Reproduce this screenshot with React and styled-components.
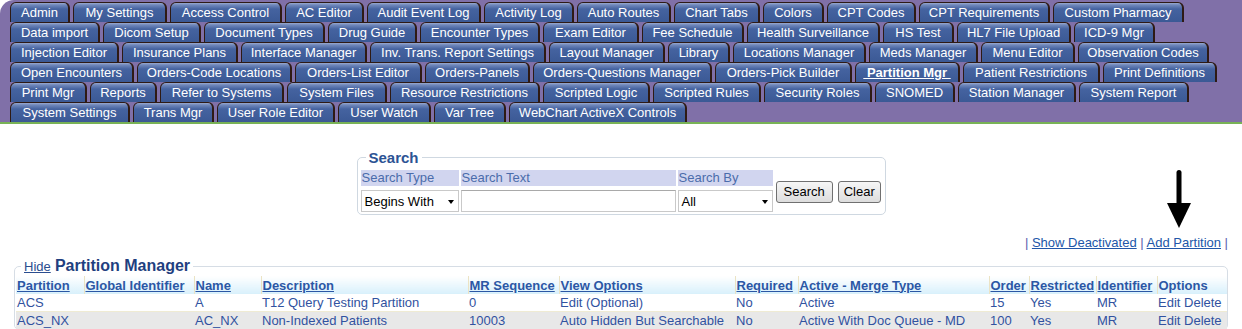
import React from 'react';
import styled, { createGlobalStyle } from 'styled-components';

const GlobalStyle = createGlobalStyle`
  body {
    margin: 0;
    background: #fff;
    font-family: "Liberation Sans", Arial, sans-serif;
    font-size: 13px;
  }
`;

// [label, tab width in px]
const TAB_ROWS = [
  [['Admin', 60], ['My Settings', 94], ['Access Control', 112], ['AC Editor', 79], ['Audit Event Log', 114], ['Activity Log', 90], ['Auto Routes', 94], ['Chart Tabs', 86], ['Colors', 61], ['CPT Codes', 89], ['CPT Requirements', 131], ['Custom Pharmacy', 131]],
  [['Data import', 90], ['Dicom Setup', 98], ['Document Types', 121], ['Drug Guide', 89], ['Encounter Types', 120], ['Exam Editor', 96], ['Fee Schedule', 102], ['Health Surveillance', 133], ['HS Test', 71], ['HL7 File Upload', 114], ['ICD-9 Mgr', 81]],
  [['Injection Editor', 109], ['Insurance Plans', 116], ['Interface Manager', 126], ['Inv. Trans. Report Settings', 176], ['Layout Manager', 116], ['Library', 62], ['Locations Manager', 133], ['Meds Manager', 109], ['Menu Editor', 94], ['Observation Codes', 131]],
  [['Open Encounters', 124], ['Orders-Code Locations', 155], ['Orders-List Editor', 127], ['Orders-Panels', 105], ['Orders-Questions Manager', 179], ['Orders-Pick Builder', 137], ['Partition Mgr', 105], ['Patient Restrictions', 137], ['Print Definitions', 114]],
  [['Print Mgr', 77], ['Reports', 67], ['Refer to Systems', 124], ['System Files', 100], ['Resource Restrictions', 150], ['Scripted Logic', 107], ['Scripted Rules', 108], ['Security Roles', 108], ['SNOMED', 80], ['Station Manager', 118], ['System Report', 110]],
  [['System Settings', 120], ['Trans Mgr', 81], ['User Role Editor', 118], ['User Watch', 93], ['Var Tree', 72], ['WebChart ActiveX Controls', 178]],
];

const ACTIVE_TAB = 'Partition Mgr';

const COLUMNS = [
  { label: 'Partition', width: 68 },
  { label: 'Global Identifier', width: 110 },
  { label: 'Name', width: 67 },
  { label: 'Description', width: 207 },
  { label: 'MR Sequence', width: 91 },
  { label: 'View Options', width: 176 },
  { label: 'Required', width: 63 },
  { label: 'Active - Merge Type', width: 191 },
  { label: 'Order', width: 40 },
  { label: 'Restricted', width: 67 },
  { label: 'Identifier', width: 61 },
  { label: 'Options', width: 70, plain: true },
];

const PARTITIONS = [
  ['ACS', '', 'A', 'T12 Query Testing Partition', '0', 'Edit (Optional)', 'No', 'Active', '15', 'Yes', 'MR', 'Edit Delete'],
  ['ACS_NX', '', 'AC_NX', 'Non-Indexed Patients', '10003', 'Auto Hidden But Searchable', 'No', 'Active With Doc Queue - MD', '100', 'Yes', 'MR', 'Edit Delete'],
];

const TabBar = styled.div`
  background: #8070a8;
  border-top-left-radius: 14px;
  padding: 2px 0 0 10px;
  border-bottom: 2px solid #78b256;
`;

const TabRow = styled.div`
  display: flex;
  gap: 3px;
  height: 20px;
`;

const Tab = styled.a`
  box-sizing: border-box;
  display: block;
  flex: none;
  height: 20px;
  border: 1px solid #2e1a14;
  border-right-width: 2px;
  border-bottom: 0;
  border-radius: 6px 6px 0 0;
  background: linear-gradient(#9aaad0 0, #6f87ba 2px, #4563a0 6px, #3b5995 100%);
  color: #fff;
  font-size: 13px;
  line-height: 19px;
  text-align: center;
  font-weight: ${p => (p.$active ? 'bold' : 'normal')};
  text-decoration: ${p => (p.$active ? 'underline' : 'none')};
  white-space: nowrap;
  cursor: pointer;
`;

const Main = styled.div`
  position: relative;
  padding: 25px 14px 0;
`;

const SearchBox = styled.fieldset`
  box-sizing: border-box;
  width: 529px;
  margin: 0 auto;
  padding: 4px 3px 2px;
  border: 1px solid #cfd8e1;
  border-radius: 5px;
`;

const Legend = styled.legend`
  margin-left: 5px;
  padding: 0 3px;
  line-height: 17px;
  font-size: 15px;
  font-weight: bold;
  color: #2c5394;
`;

const SearchGrid = styled.div`
  display: grid;
  grid-template-columns: 98px 215px 95px auto;
  grid-template-rows: 16px 22px;
  column-gap: 2px;
  row-gap: 4px;
`;

const FieldLabel = styled.div`
  background: #d1d5ef;
  color: #4b6cab;
  line-height: 16px;
  padding-left: 1px;
`;

const SelectWrap = styled.div`
  position: relative;
  box-sizing: border-box;
  height: 22px;
  border: 1px solid #c9c9c9;
  background: #fff;
  display: flex;
  align-items: center;
  padding-left: 3px;
  color: #000;

  &::after {
    content: '';
    position: absolute;
    right: 4px;
    top: 9px;
    border-left: 3.5px solid transparent;
    border-right: 3.5px solid transparent;
    border-top: 4px solid #000;
  }
`;

const TextInput = styled.input`
  box-sizing: border-box;
  height: 22px;
  width: 100%;
  margin: 0;
  border: 1px solid #c9c9c9;
  border-top-color: #a9a9a9;
  font: inherit;
`;

const ButtonGroup = styled.div`
  grid-column: 4;
  grid-row: 1 / span 2;
  display: flex;
  align-items: center;
  gap: 5px;
  padding-left: 1px;
  padding-top: 1px;
`;

const Button = styled.button`
  box-sizing: border-box;
  height: 22px;
  padding: 0 ${p => p.$pad || 7}px;
  border: 1px solid #707070;
  border-radius: 3px;
  background: linear-gradient(#f6f6f6, #dddddd);
  font: 13px "Liberation Sans", Arial, sans-serif;
  color: #000;
`;

const ArrowMark = styled.svg`
  position: absolute;
  left: 1167px;
  top: 46px;
`;

const LinkBar = styled.div`
  margin-top: 20px;
  text-align: right;
  line-height: 15px;
  color: #5a5fae;
`;

const Link = styled.a`
  color: #2156a8;
  text-decoration: underline;
  cursor: pointer;
`;

const ManagerBox = styled.fieldset`
  margin: 7px 0 0;
  padding: 1px 0 0 1px;
  border: 1px solid #d6dde5;
  border-radius: 5px;
`;

const ManagerTitle = styled.span`
  font-size: 16px;
  font-weight: bold;
  color: #1f3f80;
`;

const HideLink = styled(Link)`
  font-size: 13px;
  font-weight: normal;
  color: #2a4d8f;
`;

const Table = styled.table`
  border-collapse: collapse;
  table-layout: fixed;
  width: 1211px;
`;

const HeadCell = styled.th`
  height: 18px;
  padding: 0 1px;
  text-align: left;
  font-weight: bold;
  line-height: 17px;
  white-space: nowrap;
  overflow: hidden;
  background: linear-gradient(#ffffff, #d8f0fb);
  color: #2b57a5;
  text-decoration: ${p => (p.$plain ? 'none' : 'underline')};
  & + & {
    border-left: 1px solid #ebe3c4;
  }
`;

const Row = styled.tr`
  background: ${p => (p.$alt ? '#e8e8e8' : '#fff')};
  border-bottom: ${p => (p.$alt ? '0' : '1px solid #efebd3')};
`;

const Cell = styled.td`
  height: 17px;
  padding: 0 1px;
  line-height: 17px;
  white-space: nowrap;
  overflow: hidden;
  color: #3152a0;
`;

function TabNav() {
  return (
    <TabBar>
      {TAB_ROWS.map((row, i) => (
        <TabRow key={i}>
          {row.map(([name, width]) => {
            const active = name === ACTIVE_TAB;
            return (
              <Tab key={name} $active={active} style={{ width }}>
                {active ? `\u00a0${name}\u00a0` : name}
              </Tab>
            );
          })}
        </TabRow>
      ))}
    </TabBar>
  );
}

function SearchPanel() {
  return (
    <SearchBox>
      <Legend>Search</Legend>
      <SearchGrid>
        <FieldLabel>Search Type</FieldLabel>
        <FieldLabel>Search Text</FieldLabel>
        <FieldLabel>Search By</FieldLabel>
        <ButtonGroup>
          <Button>Search</Button>
          <Button $pad={5}>Clear</Button>
        </ButtonGroup>
        <SelectWrap>Begins With</SelectWrap>
        <TextInput type="text" />
        <SelectWrap>All</SelectWrap>
      </SearchGrid>
    </SearchBox>
  );
}

function PartitionTable() {
  return (
    <ManagerBox>
      <Legend>
        <HideLink>Hide</HideLink> <ManagerTitle>Partition Manager</ManagerTitle>
      </Legend>
      <Table>
        <colgroup>
          {COLUMNS.map(c => (
            <col key={c.label} style={{ width: c.width }} />
          ))}
        </colgroup>
        <thead>
          <tr>
            {COLUMNS.map(c => (
              <HeadCell key={c.label} $plain={c.plain}>{c.label}</HeadCell>
            ))}
          </tr>
        </thead>
        <tbody>
          {PARTITIONS.map((row, i) => (
            <Row key={row[0]} $alt={i % 2 === 1}>
              {row.map((value, j) => (
                <Cell key={j}>{value}</Cell>
              ))}
            </Row>
          ))}
        </tbody>
      </Table>
    </ManagerBox>
  );
}

export default function App() {
  return (
    <>
      <GlobalStyle />
      <TabNav />
      <Main>
        <SearchPanel />
        <ArrowMark width="25" height="58" viewBox="0 0 25 58">
          <rect x="9.5" y="0" width="5" height="38" rx="2.5" fill="#000" />
          <polygon points="0,33 24,33 12,58" fill="#000" />
        </ArrowMark>
        <LinkBar>
          | <Link>Show Deactivated</Link> | <Link>Add Partition</Link> |
        </LinkBar>
        <PartitionTable />
      </Main>
    </>
  );
}
